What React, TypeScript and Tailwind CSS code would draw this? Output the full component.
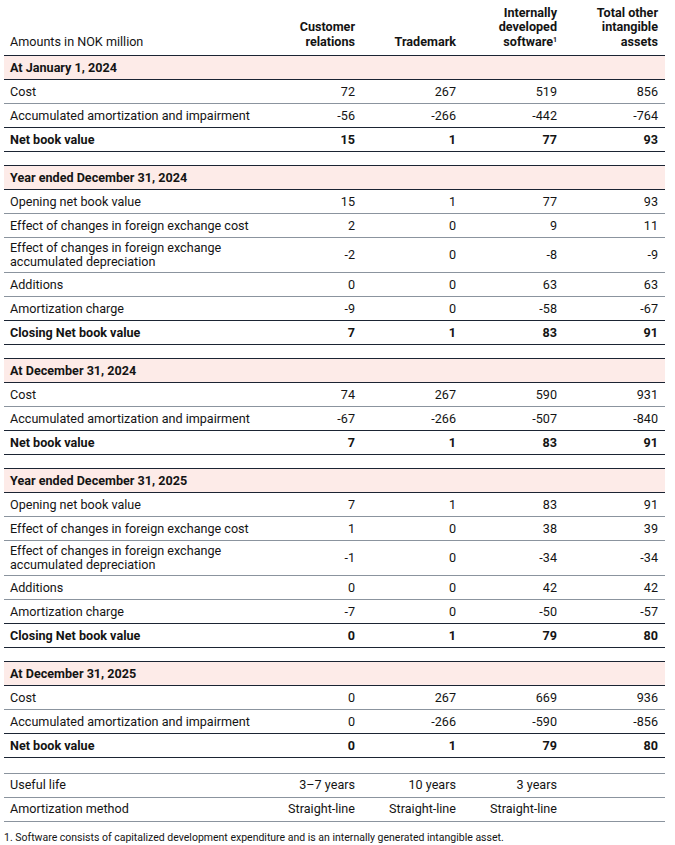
type Kind = 'section' | 'row' | 'total'

type Row = {
  kind: Kind
  label: string
  values?: string[]
  tall?: boolean
  darkBottom?: boolean
}

const SECTIONS: Row[][] = [
  [
    { kind: 'section', label: 'At January 1, 2024' },
    { kind: 'row', label: 'Cost', values: ['72', '267', '519', '856'] },
    { kind: 'row', label: 'Accumulated amortization and impairment', values: ['-56', '-266', '-442', '-764'], darkBottom: true },
    { kind: 'total', label: 'Net book value', values: ['15', '1', '77', '93'] },
  ],
  [
    { kind: 'section', label: 'Year ended December 31, 2024' },
    { kind: 'row', label: 'Opening net book value', values: ['15', '1', '77', '93'] },
    { kind: 'row', label: 'Effect of changes in foreign exchange cost', values: ['2', '0', '9', '11'] },
    { kind: 'row', label: 'Effect of changes in foreign exchange accumulated depreciation', values: ['-2', '0', '-8', '-9'], tall: true },
    { kind: 'row', label: 'Additions', values: ['0', '0', '63', '63'] },
    { kind: 'row', label: 'Amortization charge', values: ['-9', '0', '-58', '-67'], darkBottom: true },
    { kind: 'total', label: 'Closing Net book value', values: ['7', '1', '83', '91'] },
  ],
  [
    { kind: 'section', label: 'At December 31, 2024' },
    { kind: 'row', label: 'Cost', values: ['74', '267', '590', '931'] },
    { kind: 'row', label: 'Accumulated amortization and impairment', values: ['-67', '-266', '-507', '-840'], darkBottom: true },
    { kind: 'total', label: 'Net book value', values: ['7', '1', '83', '91'] },
  ],
  [
    { kind: 'section', label: 'Year ended December 31, 2025' },
    { kind: 'row', label: 'Opening net book value', values: ['7', '1', '83', '91'] },
    { kind: 'row', label: 'Effect of changes in foreign exchange cost', values: ['1', '0', '38', '39'] },
    { kind: 'row', label: 'Effect of changes in foreign exchange accumulated depreciation', values: ['-1', '0', '-34', '-34'], tall: true },
    { kind: 'row', label: 'Additions', values: ['0', '0', '42', '42'] },
    { kind: 'row', label: 'Amortization charge', values: ['-7', '0', '-50', '-57'], darkBottom: true },
    { kind: 'total', label: 'Closing Net book value', values: ['0', '1', '79', '80'] },
  ],
  [
    { kind: 'section', label: 'At December 31, 2025' },
    { kind: 'row', label: 'Cost', values: ['0', '267', '669', '936'] },
    { kind: 'row', label: 'Accumulated amortization and impairment', values: ['0', '-266', '-590', '-856'], darkBottom: true },
    { kind: 'total', label: 'Net book value', values: ['0', '1', '79', '80'] },
  ],
]

const GRID = 'grid grid-cols-[257px_101px_101px_101px_101px]'

function TableRow({ row }: { row: Row }) {
  const border =
    row.kind === 'section' || row.kind === 'total' || row.darkBottom
      ? 'border-[#1b2433]'
      : 'border-[#8b949e]'
  const bg = row.kind === 'section' ? 'bg-[#fdebe8]' : 'bg-white'
  const weight = row.kind === 'row' ? 'font-normal' : 'font-bold'
  const height = row.tall ? 'h-[35px]' : 'h-[24px]'

  return (
    <div className={`${GRID} ${height} ${bg} ${weight} border-b ${border} items-center`}>
      <div className="pl-[6px] leading-[14px]">{row.label}</div>
      {row.kind !== 'section' &&
        (row.values ?? []).map((v, i) => (
          <div key={i} className="pr-[7px] text-right leading-[14px]">
            {v}
          </div>
        ))}
    </div>
  )
}

export default function App() {
  return (
    <div className="min-h-screen bg-white font-['Roboto',sans-serif] text-[12.6px] text-[#141414]">
      <div className="w-[661px] ml-[4px]">
        {/* Header */}
        <div className={`${GRID} h-[56px] border-b border-[#1b2433] items-end pb-[6px] leading-[14.5px]`}>
          <div className="pl-[6px]">Amounts in NOK million</div>
          <div className="pr-[7px] text-right font-bold">
            Customer
            <br />
            relations
          </div>
          <div className="pr-[7px] text-right font-bold">Trademark</div>
          <div className="pr-[7px] text-right font-bold">
            Internally
            <br />
            developed
            <br />
            software<sup className="text-[7px]">1</sup>
          </div>
          <div className="pr-[7px] text-right font-bold">
            Total other
            <br />
            intangible
            <br />
            assets
          </div>
        </div>

        {SECTIONS.map((section, si) => (
          <div key={si}>
            {si > 0 && <div className="h-[14px] border-b border-[#1b2433]" />}
            {section.map((row, ri) => (
              <TableRow key={ri} row={row} />
            ))}
          </div>
        ))}

        {/* Useful life / method */}
        <div className="h-[16px] border-b border-[#8b949e]" />
        <div className={`${GRID} h-[24px] border-b border-[#8b949e] items-center`}>
          <div className="pl-[6px]">Useful life</div>
          <div className="pr-[7px] text-right">3–7 years</div>
          <div className="pr-[7px] text-right">10 years</div>
          <div className="pr-[7px] text-right">3 years</div>
          <div />
        </div>
        <div className={`${GRID} h-[24px] border-b border-[#8b949e] items-center`}>
          <div className="pl-[6px]">Amortization method</div>
          <div className="pr-[7px] text-right">Straight-line</div>
          <div className="pr-[7px] text-right">Straight-line</div>
          <div className="pr-[7px] text-right">Straight-line</div>
          <div />
        </div>

        <p className="pt-[9px] text-[10.5px] leading-[14px]">
          1. Software consists of capitalized development expenditure and is an internally generated intangible asset.
        </p>
      </div>
    </div>
  )
}
